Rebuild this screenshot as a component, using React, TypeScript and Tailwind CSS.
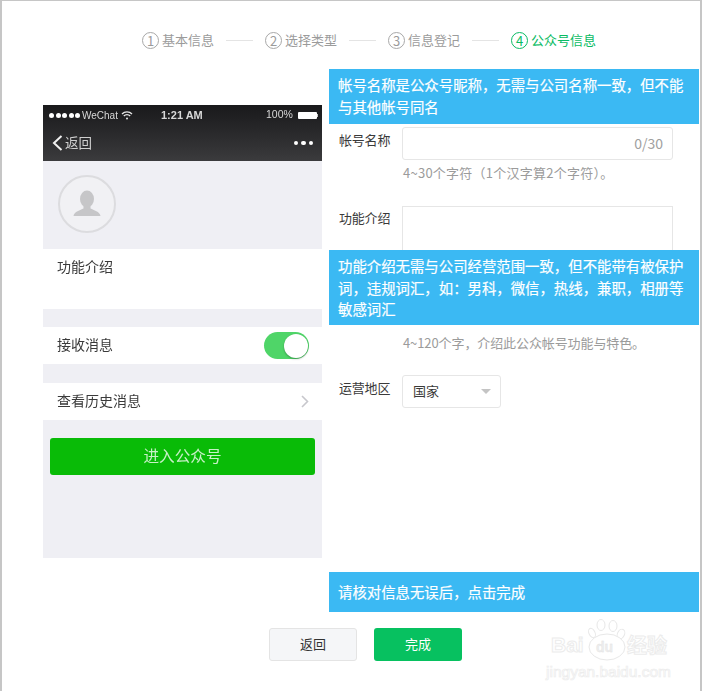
import React from "react";

const Step = ({ n, label, active }: { n: number; label: string; active?: boolean }) => (
  <div className={`flex items-center ${active ? "text-[#09bb63]" : "text-[#9b9b9b]"}`}>
    <span className={`flex h-[17px] w-[17px] items-center justify-center rounded-full border text-[13px] leading-none ${active ? "border-[#09bb63]" : "border-[#a8a8a8]"}`}>{n}</span>
    <span className="ml-[3px] text-[13px] leading-5 whitespace-nowrap">{label}</span>
  </div>
);

const Line = () => <div className="mx-[12px] h-px w-[27px] bg-[#e4e4e4]" />;

const Callout = ({ children, className }: { children: React.ReactNode; className: string }) => (
  <div className={`bg-[#3bb9f3] px-[9px] text-[14.4px] font-normal text-white [-webkit-text-stroke:0.2px_#ffffff] ${className}`}>{children}</div>
);

const Phone = () => (
  <div className="mt-[36px] ml-[41px] flex h-[453px] w-[279px] shrink-0 flex-col bg-[#efeff4] blur-[0.35px] text-[#3a3a3a]">
    <div className="h-[56px] bg-gradient-to-b from-[#19191b] to-[#3b3b3d] font-['Liberation_Sans',sans-serif] text-white">
      <div className="flex h-[20px] items-center pl-[6px] pr-[4px] text-[10px] text-[#d8d8d8]">
        <div className="flex w-[112px] shrink-0 items-center">
          <span className="flex gap-[1.5px]">
            {[0, 1, 2, 3, 4].map((i) => (
              <span key={i} className="h-[5px] w-[5px] rounded-full bg-white" />
            ))}
          </span>
          <span className="ml-[2px]">WeChat</span>
          <svg className="ml-[3px]" width="12" height="9" viewBox="0 0 12 9" fill="none" stroke="#e8e8e8" strokeWidth="1.3">
            <path d="M1 3a7 7 0 0 1 10 0M2.800 5a4.400 4.400 0 0 1 6.400 0" />
            <circle cx="6" cy="7.400" r="1" fill="#e8e8e8" stroke="none" />
          </svg>
        </div>
        <span className="w-[43px] shrink-0 whitespace-nowrap text-[11px] font-bold">1:21 AM</span>
        <span className="ml-[62px] text-[10.5px]">100%</span>
        <span className="ml-[5px] h-[7px] w-[20px] rounded-[1px] bg-white" />
        <span className="h-[3px] w-[1px] bg-[#cccccc]" />
      </div>
      <div className="flex h-[36px] items-center pl-[9px] pr-[9px]">
        <svg width="11" height="16" viewBox="0 0 11 16" fill="none" stroke="#f0f0f0" strokeWidth="2">
          <path d="M9.500 1L2 8l7.500 7" />
        </svg>
        <span className="ml-[2px] pb-[1px] font-['Noto_Sans_CJK_SC',sans-serif] text-[13.5px] text-[#cfcfcf]">返回</span>
        <span className="ml-auto flex gap-[3px]">
          {[0, 1, 2].map((i) => (
            <span key={i} className="h-[4.500px] w-[4.500px] rounded-full bg-white" />
          ))}
        </span>
      </div>
    </div>
    <div className="h-[88px] pl-[15px] pt-[14px]">
      <div className="flex h-[58px] w-[58px] items-center justify-center rounded-full border-2 border-[#dcdcdf] bg-[#f1f1f4]">
        <svg width="32" height="32" viewBox="0 0 32 32" fill="#c6c6c8">
          <ellipse cx="16" cy="11" rx="7" ry="8.500" />
          <path d="M12.500 18h7v2.500c3 1.600 9.500 3 10 7.500H2.500c.5-4.500 7-5.900 10-7.500z" />
        </svg>
      </div>
    </div>
    <div className="h-[60px] bg-white pl-[14px] pt-[7px] text-[14px] leading-5">功能介绍</div>
    <div className="mt-[18px] flex h-[37px] items-center bg-white pl-[14px] text-[14px]">
      <span className="pb-[2px]">接收消息</span>
      <div className="relative ml-auto mr-[13px] h-[27px] w-[45px] rounded-full bg-[#4fd568]">
        <span className="absolute right-[1px] top-[1.500px] h-[24px] w-[24px] rounded-full bg-white shadow-[0_1px_2px_rgba(0,0,0,0.3)]" />
      </div>
    </div>
    <div className="mt-[19px] flex h-[37px] items-center bg-white pl-[14px] text-[14px]">
      <span className="pb-[2px]">查看历史消息</span>
      <svg className="ml-auto mr-[13px]" width="8" height="13" viewBox="0 0 8 13" fill="none" stroke="#c7c7cc" strokeWidth="1.600">
        <path d="M1 1l5.500 5.500L1 12" />
      </svg>
    </div>
    <div className="mx-[7px] mt-[18px] flex h-[37px] items-center justify-center rounded-[3px] bg-[#09bb07] pb-[2px] text-[15.6px] text-[#c8f0c8]">进入公众号</div>
  </div>
);

const Form = () => (
  <div className="w-[370px] shrink-0 text-[13px] leading-5 text-[#3a3a3a]">
    <Callout className="h-[55px] pt-[5px] leading-[22px]">帐号名称是公众号昵称，无需与公司名称一致，但不能与其他帐号同名</Callout>
    <div className="mt-[3px] flex">
      <span className="ml-[10px] w-[63px] pt-[3px] tracking-[-0.2px]">帐号名称</span>
      <div className="flex h-[33px] w-[271px] items-center justify-end rounded-[3px] border border-[#e6e6e6] pb-[2px] pr-[9px] text-[14px] text-[#a0a0a0]">0/30</div>
    </div>
    <div className="ml-[74px] mt-[3px] tracking-[0.25px] text-[#9b9b9b]">4~30个字符（1个汉字算2个字符）。</div>
    <div className="mt-[23px] flex">
      <span className="ml-[10px] w-[63px] pt-[2px] tracking-[-0.2px]">功能介绍</span>
      <div className="h-[44px] w-[271px] border border-b-0 border-[#e6e6e6]" />
    </div>
    <Callout className="h-[75px] pt-[5px] leading-[21.5px]">功能介绍无需与公司经营范围一致，但不能带有被保护词，违规词汇，如：男科，微信，热线，兼职，相册等敏感词汇</Callout>
    <div className="ml-[74px] mt-[8px] tracking-[-0.1px] text-[#9b9b9b]">4~120个字，介绍此公众帐号功能与特色。</div>
    <div className="mt-[22px] flex">
      <span className="ml-[10px] w-[63px] pt-[3px] tracking-[-0.2px]">运营地区</span>
      <div className="flex h-[33px] w-[99px] items-center rounded-[3px] border border-[#e6e6e6] pl-[10px] pr-[9px]">
        <span className="pb-[2px]">国家</span>
        <span className="ml-auto h-0 w-0 border-x-[5px] border-t-[5px] border-x-transparent border-t-[#c4c4c4]" />
      </div>
    </div>
    <Callout className="mt-[164px] flex h-[40px] items-center">请核对信息无误后，点击完成</Callout>
  </div>
);

const Watermark = () => (
  <div className="pointer-events-none absolute left-[544px] top-[618px] h-[62px] w-[130px] font-['Liberation_Sans',sans-serif] text-white [-webkit-text-stroke:1px_#ececec]">
    <span className="absolute left-[5px] top-[14px] text-[21px] font-bold leading-6">Bai</span>
    <svg className="absolute left-[41px] top-0" width="42" height="46" viewBox="0 0 42 46" fill="#ffffff" stroke="#e8e8e8" strokeWidth="1">
      <ellipse cx="5" cy="14" rx="3" ry="5" transform="rotate(-25 5 14)" />
      <ellipse cx="14" cy="6" rx="4" ry="5.500" />
      <ellipse cx="26" cy="7" rx="4" ry="5.500" />
      <ellipse cx="34" cy="15" rx="3.500" ry="5" transform="rotate(25 34 15)" />
      <ellipse cx="20" cy="28" rx="18" ry="13" />
    </svg>
    <span className="absolute left-[50px] top-[20px] text-[14px] font-bold leading-4 text-[#eeeeee] [-webkit-text-stroke:0.3px_#e2e2e2]">du</span>
    <span className="absolute left-[81px] top-[14px] font-['Noto_Sans_CJK_SC',sans-serif] text-[20px] font-bold leading-6">经验</span>
    <span className="absolute left-0 top-[43px] whitespace-nowrap text-[15.500px] leading-5 [-webkit-text-stroke:0.7px_#ececec]">jingyan.baidu.com</span>
  </div>
);

export default function App() {
  return (
    <div className="relative h-[691px] w-[702px] border-x-2 border-t border-[#c6c6c6] bg-white font-['Noto_Sans_CJK_SC',sans-serif]">
      <div className="flex h-[68px] items-center pl-[140px] pt-[10px]">
        <Step n={1} label="基本信息" />
        <Line />
        <Step n={2} label="选择类型" />
        <Line />
        <Step n={3} label="信息登记" />
        <Line />
        <Step n={4} label="公众号信息" active />
      </div>
      <div className="flex items-start gap-[7px]">
        <Phone />
        <Form />
      </div>
      <div className="mt-[16px] flex gap-[17px] pl-[267px] text-[13px]">
        <div className="flex h-[33px] w-[88px] items-center justify-center rounded-[3px] border border-[#e4e4e4] bg-[#f5f6f8] pb-[2px] text-[#333333]">返回</div>
        <div className="flex h-[33px] w-[88px] items-center justify-center rounded-[3px] bg-[#07c160] pb-[2px] text-white">完成</div>
      </div>
      <Watermark />
    </div>
  );
}
